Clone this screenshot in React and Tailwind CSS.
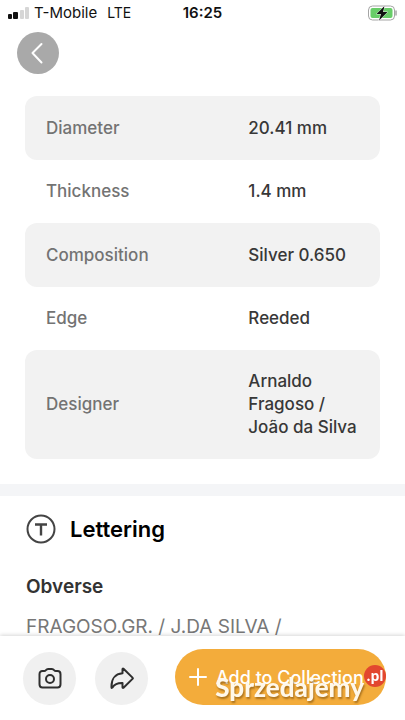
const specs = [
  { label: "Diameter", value: "20.41 mm" },
  { label: "Thickness", value: "1.4 mm" },
  { label: "Composition", value: "Silver 0.650" },
  { label: "Edge", value: "Reeded" },
  { label: "Designer", value: "Arnaldo Fragoso / João da Silva" },
]

function StatusBar() {
  return (
    <div className="grid grid-cols-3 items-center h-[26px] px-2 text-[15px] text-[#111]">
      <div className="flex items-center whitespace-nowrap">
        <svg className="w-[22px] h-3" viewBox="0 0 22 12" fill="#111">
          <rect x="0" y="7" width="4" height="5" rx="1" />
          <rect x="5" y="5" width="5" height="7" rx="1" />
          <rect x="12" y="3" width="4" height="9" rx="1" fill="#d6d6d6" />
          <rect x="17" y="0" width="4" height="12" rx="1" fill="#d6d6d6" />
        </svg>
        <span className="ml-1">T-Mobile</span>
        <span className="ml-[10px] text-sm">LTE</span>
      </div>
      <span className="text-center text-[15px] font-semibold">16:25</span>
      <svg className="justify-self-end w-[29px] h-[17px]" viewBox="0 0 29 17">
        <rect x="0.5" y="1" width="26" height="14" rx="4" fill="#fff" stroke="#a5a5a5" />
        <rect x="2.5" y="3" width="22" height="10" rx="2" fill="#68cd68" />
        <path d="M28 6v4" stroke="#a5a5a5" strokeWidth="1.5" strokeLinecap="round" />
        <path d="M16.500 1 8.500 9h4.500l-2 6.500 8.500-8.500h-4.500z" fill="#111" stroke="#fff" strokeWidth="0.8" paintOrder="stroke" />
      </svg>
    </div>
  )
}

function SpecTable() {
  return (
    <table className="w-full table-fixed border-separate border-spacing-0 text-[17px] leading-[23px] font-medium">
      <tbody>
        {specs.map((spec) => (
          <tr key={spec.label} className="h-[63px] odd:h-16 odd:bg-[#f2f2f2] rounded-xl">
            <th scope="row" className="w-[57%] pl-[21px] py-5 text-left font-medium text-[#737373] rounded-l-xl">
              {spec.label}
            </th>
            <td className="py-5 pl-[21px] pr-4 text-[#383838] rounded-r-xl">{spec.value}</td>
          </tr>
        ))}
      </tbody>
    </table>
  )
}

function ActionBar() {
  return (
    <div className="fixed bottom-0 inset-x-0 flex items-start h-21 pt-[13px] pl-[23px] pr-[19px] bg-white shadow-[0_-1px_4px_rgba(0,0,0,0.16)]">
      <button aria-label="Camera" className="flex shrink-0 items-center justify-center size-[53px] mt-[3px] rounded-full bg-[#f0f0f0]">
        <svg className="size-6" viewBox="0 0 24 24" fill="none" stroke="#2e2e2e" strokeWidth="2" strokeLinejoin="round">
          <path d="M1.500 7.200c0-2 1-3.200 3-3.200h1.700c.8 0 1.200-.3 1.700-.9.600-.8 1.200-1.200 2.200-1.200h3.800c1 0 1.600.4 2.200 1.200.5.600.9.900 1.700.9h1.700c2 0 3 1.200 3 3.200v10c0 2-1 3.200-3 3.200h-15c-2 0-3-1.200-3-3.200z" />
          <circle cx="12" cy="12" r="4" />
        </svg>
      </button>
      <button aria-label="Share" className="flex shrink-0 items-center justify-center size-[53px] mt-[3px] ml-[19px] rounded-full bg-[#f0f0f0]">
        <svg className="size-6" viewBox="0 0 24 24" fill="none" stroke="#2e2e2e" strokeWidth="2" strokeLinejoin="round" strokeLinecap="round">
          <path d="M12.500 2.200c0-.6.500-.8 1-.4l9 8.800c.4.400.4.900 0 1.300l-9 8.800c-.5.400-1 .2-1-.4v-4.300c-4.800-.2-8 1.300-10.200 4.600-.3.500-.8.400-.8-.2C1.200 12.500 5 6.800 12.500 6.300z" />
        </svg>
      </button>
      <div className="relative flex-1 ml-[27px]">
        <button className="flex items-center w-full h-14 pl-[14px] rounded-full bg-[#f3ac3b] text-white text-[18px] font-medium whitespace-nowrap">
          <svg className="size-[18px] mr-[9px]" viewBox="0 0 18 18" stroke="#fff" strokeWidth="2" strokeLinecap="round">
            <path d="M9 1v16M1 9h16" />
          </svg>
          Add to Collection
        </button>
        <div className="absolute right-0 top-4 flex items-start">
          <span className="font-['Lato',sans-serif] text-[26px] leading-[44px] font-black text-[#fff8ea] [text-shadow:1px_2px_2px_rgba(120,75,10,0.6)]">
            Sprzedajemy
          </span>
          <span className="flex items-center justify-center size-[22px] rounded-full bg-[#e2472f] font-['Open_Sans',sans-serif] text-[14px] leading-none font-bold text-white">
            .pl
          </span>
        </div>
      </div>
    </div>
  )
}

export default function App() {
  return (
    <div className="min-h-screen bg-white font-['Inter',sans-serif]">
      <header>
        <StatusBar />
        <div className="pt-[6px] pl-[17px]">
          <button aria-label="Back" className="flex items-center justify-center size-[42px] rounded-full bg-[#a9a9a9]">
            <svg className="size-6" viewBox="0 0 24 24" fill="none" stroke="#fff" strokeWidth="2" strokeLinecap="round" strokeLinejoin="round">
              <path d="M15.500 3 6.500 12l9 9.500" />
            </svg>
          </button>
        </div>
      </header>

      <main>
        <section className="px-[25px] pt-[22px] pb-[25px]">
          <SpecTable />
        </section>

        <div className="h-3 bg-[#f4f5f7]" />

        <section className="px-[26px] pt-4">
          <div className="flex items-center h-[34px]">
            <svg className="size-[30px]" viewBox="0 0 30 30" fill="none" stroke="#444" strokeWidth="2">
              <circle cx="15" cy="15" r="13.500" />
              <path d="M9 10.500h12M15 10.500v11" strokeWidth="2.400" />
            </svg>
            <h2 className="ml-[14px] text-[22px] font-semibold text-black">Lettering</h2>
          </div>
          <h3 className="mt-7 text-[19px] leading-[26px] font-semibold text-[#333]">Obverse</h3>
          <p className="mt-[14px] text-[19px] leading-[26px] text-[#777]">FRAGOSO.GR. / J.DA SILVA /</p>
        </section>
      </main>

      <ActionBar />
    </div>
  )
}
